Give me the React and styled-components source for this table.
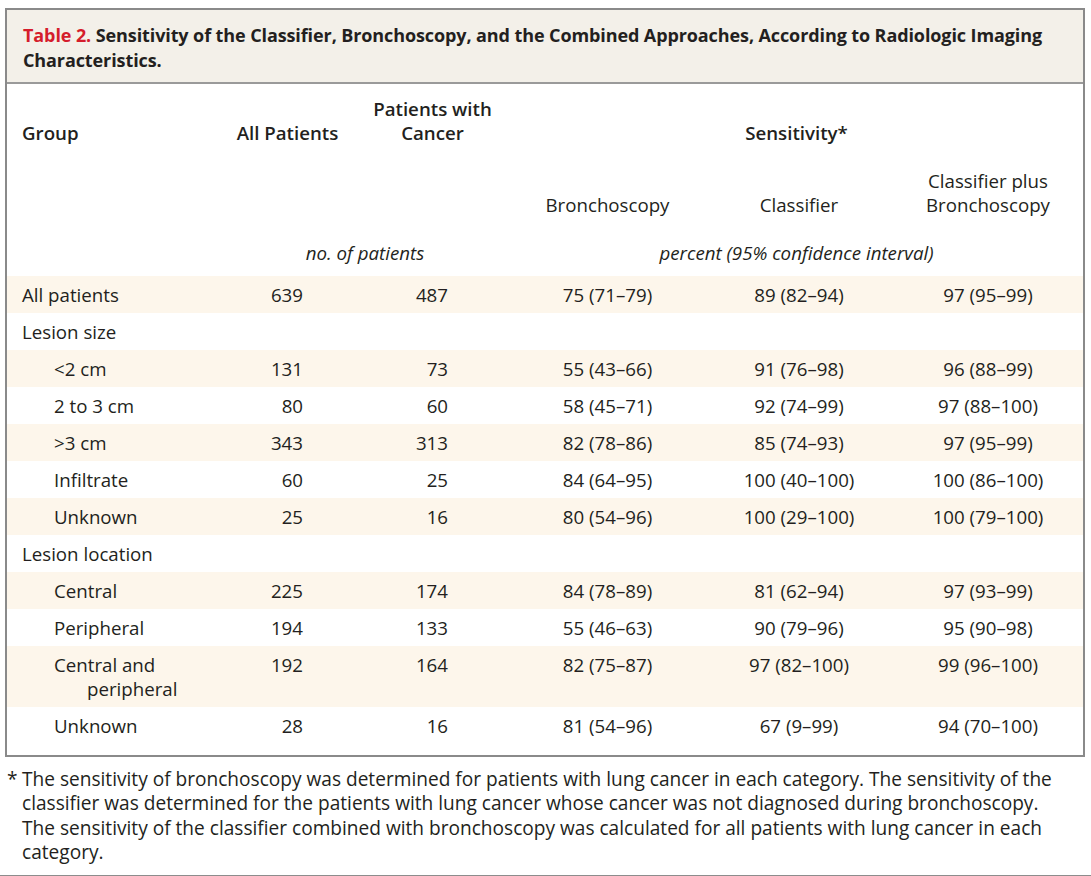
import React from 'react';
import styled, { createGlobalStyle } from 'styled-components';

const GlobalStyle = createGlobalStyle`
    html, body {
        margin: 0;
        padding: 0;
        background: #ffffff;
    }
    body {
        font-family: "Open Sans", "Noto Sans", sans-serif;
        color: #231f20;
    }
`;

const Page = styled.div`
    width: 1091px;
    height: 876px;
    padding: 8px 6px 0 5px;
    box-sizing: border-box;
    border-bottom: 1px solid #8c8c8c;
`;

const Box = styled.div`
    border: 2px solid #8a8a8a;
`;

const Caption = styled.div`
    background: #f3f0e9;
    border-bottom: 2px solid #9a9a9a;
    padding: 13px 16px 9px;
    font-size: 18px;
    line-height: 25px;
    font-weight: 700;
    letter-spacing: -0.1px;
`;

const Label = styled.span`
    color: #d51d2c;
`;

const Table = styled.table`
    width: 100%;
    border-collapse: collapse;
    table-layout: fixed;
    font-size: 18.7px;
    line-height: 24px;
`;

const HeadCell = styled.th`
    font-weight: ${p => (p.$plain ? 400 : 600)};
    font-style: ${p => (p.$italic ? 'italic' : 'normal')};
    text-align: ${p => p.$align || 'center'};
    vertical-align: bottom;
    padding: ${p => p.$pad || '0'};
    padding-left: ${p => (p.$align === 'left' ? '15px' : '0')};
`;

const Row = styled.tr`
    background: ${p => (p.$shade ? '#fdf6eb' : 'transparent')};
`;

const Cell = styled.td`
    padding: 6.5px 0;
    vertical-align: top;
    text-align: center;
`;

const GroupCell = styled(Cell)`
    text-align: left;
    padding-left: ${p => (p.$indent ? '47px' : '15px')};
`;

const WrapName = styled.span`
    display: inline-block;
    padding-left: 33px;
    text-indent: -33px;
`;

const CountCell = styled(Cell)`
    text-align: right;
    padding-right: ${p => p.$right}px;
`;

const Spacer = styled.tr`
    height: ${p => p.$h}px;
`;

const Note = styled.div`
    display: flex;
    margin: 10px 18px 0 2px;
    font-size: 19.1px;
    line-height: 24.4px;
`;

const Star = styled.span`
    width: 15px;
    flex: none;
`;

const rows = [
    { name: 'All patients', all: '639', cancer: '487', vals: ['75 (71–79)', '89 (82–94)', '97 (95–99)'], shade: true },
    { name: 'Lesion size', heading: true },
    { name: '<2 cm', indent: true, all: '131', cancer: '73', vals: ['55 (43–66)', '91 (76–98)', '96 (88–99)'], shade: true },
    { name: '2 to 3 cm', indent: true, all: '80', cancer: '60', vals: ['58 (45–71)', '92 (74–99)', '97 (88–100)'] },
    { name: '>3 cm', indent: true, all: '343', cancer: '313', vals: ['82 (78–86)', '85 (74–93)', '97 (95–99)'], shade: true },
    { name: 'Infiltrate', indent: true, all: '60', cancer: '25', vals: ['84 (64–95)', '100 (40–100)', '100 (86–100)'] },
    { name: 'Unknown', indent: true, all: '25', cancer: '16', vals: ['80 (54–96)', '100 (29–100)', '100 (79–100)'], shade: true },
    { name: 'Lesion location', heading: true },
    { name: 'Central', indent: true, all: '225', cancer: '174', vals: ['84 (78–89)', '81 (62–94)', '97 (93–99)'], shade: true },
    { name: 'Peripheral', indent: true, all: '194', cancer: '133', vals: ['55 (46–63)', '90 (79–96)', '95 (90–98)'] },
    { name: 'Central and', wrap: 'peripheral', indent: true, all: '192', cancer: '164', vals: ['82 (75–87)', '97 (82–100)', '99 (96–100)'], shade: true },
    { name: 'Unknown', indent: true, all: '28', cancer: '16', vals: ['81 (54–96)', '67 (9–99)', '94 (70–100)'] },
];

function DataRow({ row }) {
    if (row.heading) {
        return (
            <Row>
                <GroupCell colSpan={6}>{row.name}</GroupCell>
            </Row>
        );
    }

    return (
        <Row $shade={row.shade}>
            <GroupCell $indent={row.indent}>
                {row.wrap ? <WrapName>{row.name}<br />{row.wrap}</WrapName> : row.name}
            </GroupCell>
            <CountCell $right={52}>{row.all}</CountCell>
            <CountCell $right={62}>{row.cancer}</CountCell>
            {row.vals.map((v, i) => <Cell key={i}>{v}</Cell>)}
        </Row>
    );
}

export default function App() {
    return (
        <Page>
            <GlobalStyle />
            <Box>
                <Caption>
                    <Label>Table 2.</Label> Sensitivity of the Classifier, Bronchoscopy, and the Combined Approaches, According to Radiologic Imaging Characteristics.
                </Caption>
                <Table>
                    <colgroup>
                        <col style={{ width: 213 }} />
                        <col style={{ width: 135 }} />
                        <col style={{ width: 155 }} />
                        <col style={{ width: 195 }} />
                        <col style={{ width: 188 }} />
                        <col />
                    </colgroup>
                    <thead>
                        <Spacer $h={13}><td colSpan={6} /></Spacer>
                        <tr>
                            <HeadCell $align="left">Group</HeadCell>
                            <HeadCell>All Patients</HeadCell>
                            <HeadCell>Patients with<br />Cancer</HeadCell>
                            <HeadCell colSpan={3}>Sensitivity*</HeadCell>
                        </tr>
                        <tr>
                            <HeadCell colSpan={3} $pad="24px 0 0" />
                            <HeadCell $plain $pad="24px 0 0">Bronchoscopy</HeadCell>
                            <HeadCell $plain $pad="24px 0 0">Classifier</HeadCell>
                            <HeadCell $plain $pad="24px 0 0">Classifier plus<br />Bronchoscopy</HeadCell>
                        </tr>
                        <tr>
                            <HeadCell $pad="24px 0 11px" />
                            <HeadCell colSpan={2} $plain $italic $pad="24px 0 11px">no. of patients</HeadCell>
                            <HeadCell colSpan={3} $plain $italic $pad="24px 0 11px">percent (95% confidence interval)</HeadCell>
                        </tr>
                    </thead>
                    <tbody>
                        {rows.map((row, i) => <DataRow row={row} key={i} />)}
                        <Spacer $h={11}><td colSpan={6} /></Spacer>
                    </tbody>
                </Table>
            </Box>
            <Note>
                <Star>*</Star>
                <span>
                    The sensitivity of bronchoscopy was determined for patients with lung cancer in each category. The sensitivity of the classifier was determined for the patients with lung cancer whose cancer was not diagnosed during bronchoscopy. The sensitivity of the classifier combined with bronchoscopy was calculated for all patients with lung cancer in each category.
                </span>
            </Note>
        </Page>
    );
}
